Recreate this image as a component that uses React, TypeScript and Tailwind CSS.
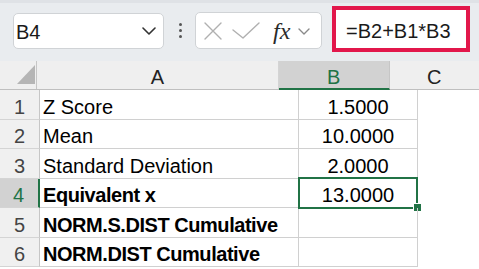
import React from "react";

const GREEN = "#217346";

function Chevron({ color, w, h, sw }: { color: string; w: number; h: number; sw: number }) {
  return (
    <svg width={w} height={h} viewBox={`0 0 ${w} ${h}`} fill="none">
      <path d={`M1 1 L${w / 2} ${h - 1} L${w - 1} 1`} stroke={color} strokeWidth={sw} strokeLinecap="round" strokeLinejoin="round" />
    </svg>
  );
}

type Row = { n: number; a: string; b: string; bold?: boolean; h: string; sel?: boolean };

const rows: Row[] = [
  { n: 1, a: "Z Score", b: "1.5000", h: "h-[30px]" },
  { n: 2, a: "Mean", b: "10.0000", h: "h-[29px]" },
  { n: 3, a: "Standard Deviation", b: "2.0000", h: "h-[30px]" },
  { n: 4, a: "Equivalent x", b: "13.0000", bold: true, h: "h-[29px]", sel: true },
  { n: 5, a: "NORM.S.DIST Cumulative", b: "", bold: true, h: "h-[30px]" },
  { n: 6, a: "NORM.DIST Cumulative", b: "", bold: true, h: "h-[29px]" },
];

export default function App() {
  return (
    <div className="w-[479px] h-[269px] overflow-hidden bg-white" style={{ fontFamily: '"Liberation Sans", Arial, sans-serif' }}>
      {/* Toolbar */}
      <div className="h-[61px] bg-[#e9ecef] border-t-[3px] border-[#dfe2e6] flex items-start">
        <div className="ml-[13px] mt-[10px] w-[151px] h-[36px] bg-white border border-[#d0d3d6] rounded-[5px] flex items-center pl-[2px] pr-[7px]">
          <span className="flex-1 text-[20px] leading-[20px] text-[#1a1a1a] pt-[2px]">B4</span>
          <Chevron color="#333" w={14} h={8} sw={1.6} />
        </div>
        <div className="ml-[15px] mt-[20px] flex flex-col gap-[3px]">
          <div className="w-[3px] h-[3px] rounded-full bg-[#555]" />
          <div className="w-[3px] h-[3px] rounded-full bg-[#555]" />
          <div className="w-[3px] h-[3px] rounded-full bg-[#555]" />
        </div>
        <div className="ml-[13px] mt-[9px] w-[127px] h-[37px] bg-white border border-[#d0d3d6] rounded-[5px] flex items-center pl-[8px]">
          <svg width="18" height="18" viewBox="0 0 18 18" fill="none">
            <path d="M1 1 L17 17 M17 1 L1 17" stroke="#b0b0b0" strokeWidth="1.4" strokeLinecap="round" />
          </svg>
          <svg className="ml-[10px]" width="28" height="17" viewBox="0 0 28 17" fill="none">
            <path d="M1 8 L11 16 L27 1" stroke="#b0b0b0" strokeWidth="1.4" strokeLinecap="round" strokeLinejoin="round" />
          </svg>
          <span
            className="ml-[13px] text-[24px] leading-[20px] text-[#2a2a2a] italic"
            style={{ fontFamily: '"Liberation Serif", "Times New Roman", serif' }}
          >
            fx
          </span>
          <span className="ml-[8px] mt-[2px]">
            <Chevron color="#8a8a8a" w={12} h={7} sw={1.4} />
          </span>
        </div>
        <div className="ml-[10px] mt-[3px] w-[138px] h-[46px] bg-white border-[4px] border-[#e2174b] pl-[10px] pt-[11px]">
          <span className="text-[20px] leading-[20px] text-[#1a1a1a] block">=B2+B1*B3</span>
        </div>
      </div>

      {/* Header row */}
      <div className="flex h-[29px] bg-[#efefef] border-b border-[#bfbfbf]">
        <div className="w-[40px] border-r border-[#c6c6c6] relative">
          <svg className="absolute left-0 top-0" width="39" height="28" viewBox="0 0 39 28">
            <polygon points="35,4 35,23 17,23" fill="#b5b5b5" />
          </svg>
        </div>
        <div className="w-[259px] border-r border-[#d4d4d4] flex items-end justify-center pb-[2px] text-[20px] leading-[20px] text-[#222]">
          A
        </div>
        <div className="w-[119px] bg-[#d2d2d2] border-r border-[#c6c6c6] border-b-2 border-b-[#217346] -mb-[1px] flex items-end justify-center pb-[1px] text-[20px] leading-[20px]" style={{ color: GREEN }}>
          B
        </div>
        <div className="w-[96px] flex items-end justify-center pb-[2px] text-[20px] leading-[20px] text-[#222]">
          C
        </div>
      </div>

      {rows.map((r) => (
        <div key={r.n} className={`flex ${r.h}`}>
          <div
            className={`w-[40px] border-b border-[#d4d4d4] flex items-end justify-center pb-[2px] text-[20px] leading-[20px] ${
              r.sel ? "bg-[#d2d2d2] border-r-2 border-r-[#217346] pr-[1px]" : "bg-[#f0f0f0] border-r border-r-[#c6c6c6]"
            }`}
            style={{ color: r.sel ? GREEN : "#444" }}
          >
            {r.n}
          </div>
          <div
            className={`w-[259px] border-b border-r border-[#d0d0d0] flex items-end pl-[3px] pb-[2px] text-[20px] leading-[20px] text-black whitespace-nowrap ${
              r.bold ? "font-bold tracking-[-0.45px]" : ""
            } ${r.sel ? "w-[258px]" : ""}`}
          >
            {r.a}
          </div>
          <div className="w-[119px] border-b border-r border-[#d0d0d0] flex items-end justify-center pb-[2px] text-[20px] leading-[20px] text-black relative">
            {r.b}
            {r.sel && (
              <>
                <div className="absolute left-[-1px] top-[-2px] right-[-1px] bottom-[-2px] border-2 border-[#217346]" />
                <div className="absolute right-[-5px] bottom-[-5px] w-[9px] h-[9px] bg-[#217346] border border-white" />
              </>
            )}
          </div>
          <div className="flex-1" />
        </div>
      ))}
    </div>
  );
}
